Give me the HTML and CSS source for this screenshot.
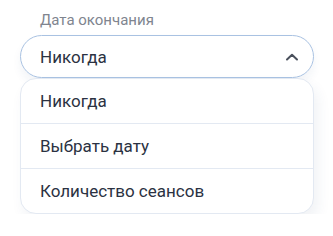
FILE: index.html
```html
<!DOCTYPE html>
<html lang="ru">
<head>
    <meta charset="UTF-8">
    <meta name="viewport" content="width=device-width, initial-scale=1.0">
    <title>Дата окончания</title>
    <link rel="stylesheet" href="styles.css">
</head>
<body>
    <div class="field">
        <label class="field-label">Дата окончания</label>
        <div class="select">
            <span class="select-value">Никогда</span>
            <svg class="select-arrow" width="14" height="10" viewBox="0 0 14 10">
                <path d="M2 7.5 L7 2.8 L12 7.5" fill="none" stroke="#4a505c" stroke-width="2" stroke-linecap="round" stroke-linejoin="round"/>
            </svg>
        </div>
        <ul class="options">
            <li class="option">Никогда</li>
            <li class="option">Выбрать дату</li>
            <li class="option">Количество сеансов</li>
        </ul>
    </div>
</body>
</html>
```

FILE: styles.css
```css
* {
    margin: 0;
    padding: 0;
    box-sizing: border-box;
}

body {
    font-family: Roboto, 'Noto Sans', sans-serif;
    background-color: #fff;
    color: #2b3242;
}

.field {
    padding: 12px 19px 0 20px;
}

.field-label {
    display: block;
    padding-left: 20px;
    font-size: 15px;
    line-height: 17px;
    color: #80858f;
    margin-bottom: 6px;
}

.select {
    display: flex;
    align-items: center;
    justify-content: space-between;
    height: 43px;
    padding: 0 14px 0 19px;
    border: 1.5px solid #a9c2e2;
    border-radius: 22px;
    box-shadow: 0 6px 10px rgba(40, 70, 120, 0.06);
}

.select-value {
    font-size: 17px;
}

.options {
    list-style: none;
    background-color: #fff;
    border: 1px solid #e3e9f2;
    border-radius: 16px;
    box-shadow: 4px 8px 14px rgba(40, 70, 120, 0.07);
    overflow: hidden;
}

.option {
    height: 45px;
    line-height: 44px;
    padding-left: 19px;
    font-size: 17px;
    border-bottom: 1px solid #e3e9f2;
}

.option:last-child {
    height: 44px;
    border-bottom: none;
}
```
